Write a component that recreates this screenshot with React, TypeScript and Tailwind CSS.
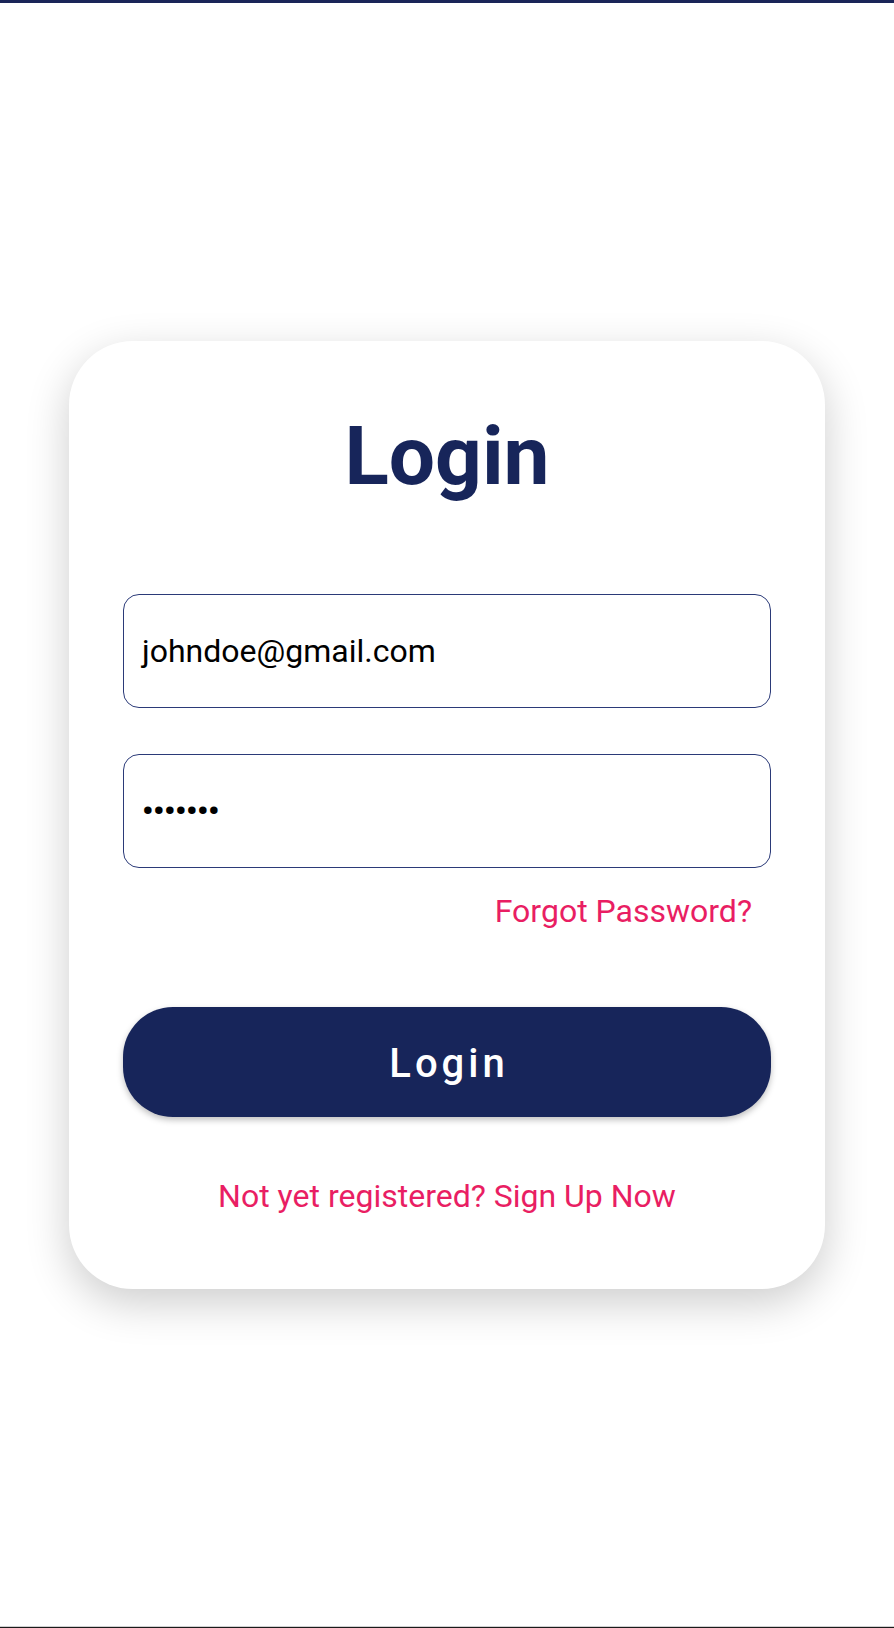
import React from "react";

export default function App() {
  return (
    <div
      className="h-[1628px] w-full bg-white flex flex-col"
      style={{ fontFamily: "Roboto, 'Noto Sans', sans-serif" }}
    >
      <div className="h-[3px] bg-[#1a2558]" />
      <div className="flex-1 flex items-center justify-center">
        <div className="w-[756px] rounded-[64px] bg-white shadow-[0_14px_44px_rgba(0,0,0,0.2)] px-[54px] pt-[75px] pb-[77px] flex flex-col">
          <h1 className="text-center text-[82px] leading-[80px] font-bold text-[#17255a]">
            Login
          </h1>
          <div className="mt-[98px] h-[114px] rounded-[16px] border border-[#2b3a78] flex items-center pl-[18px] text-[32px] text-black">
            johndoe@gmail.com
          </div>
          <div className="mt-[46px] h-[114px] rounded-[16px] border border-[#2b3a78] flex items-center pl-[18px] text-[32px] font-bold text-black tracking-[-0.5px]">
            •••••••
          </div>
          <div className="mt-[27px] self-end mr-[19px] text-[32px] leading-[32px] text-[#e91e63]">
            Forgot Password?
          </div>
          <button className="mt-[80px] h-[110px] rounded-[50px] bg-[#17255a] shadow-[0_3px_6px_rgba(0,0,0,0.25)] flex items-center justify-center text-white text-[40px] font-medium tracking-[4px] pl-[4px] pt-[5px]">
            Login
          </button>
          <div className="mt-[63px] text-center text-[32px] leading-[32px] text-[#e91e63]">
            Not yet registered? Sign Up Now
          </div>
        </div>
      </div>
      <div className="h-px bg-[#d0d0d0]" />
      <div className="h-px bg-[#1a1a1a]" />
    </div>
  );
}
